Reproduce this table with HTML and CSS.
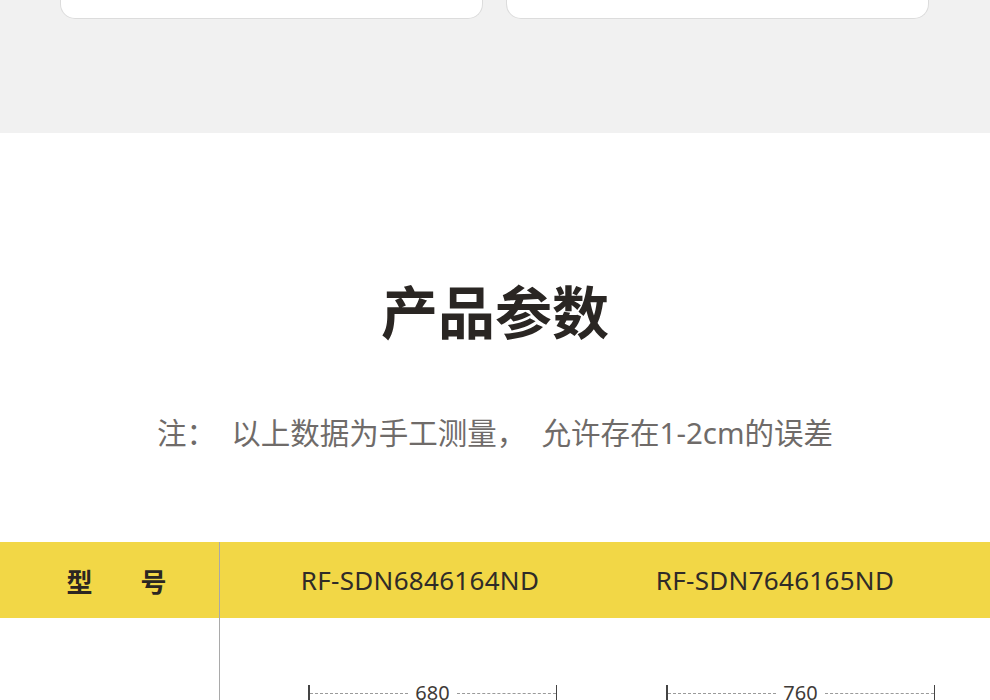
FILE: index.html
```html
<!DOCTYPE html>
<html lang="zh-CN">
<head>
<meta charset="utf-8">
<title>产品参数</title>
<link rel="stylesheet" href="styles.css">
</head>
<body>
<section class="gray">
  <div class="card"></div>
  <div class="card"></div>
</section>
<section class="params">
  <h1 class="title">产品参数</h1>
  <p class="note">注：&nbsp;&nbsp;以上数据为手工测量，&nbsp;&nbsp;允许存在1-2cm的误差</p>
</section>
<section class="table">
  <div class="row head">
    <div class="label">型<span class="sp"></span>号</div>
    <div class="cell c1">RF-SDN6846164ND</div>
    <div class="cell c2">RF-SDN7646165ND</div>
  </div>
  <div class="row body">
    <div class="label"></div>
    <div class="cell c1"><div class="dim d1"><i class="tick"></i><i class="dash"></i><span>680</span><i class="dash"></i><i class="tick"></i></div></div>
    <div class="cell c2"><div class="dim d2"><i class="tick"></i><i class="dash"></i><span>760</span><i class="dash"></i><i class="tick"></i></div></div>
  </div>
</section>
</body>
</html>
```
FILE: styles.css
```css
html, body { margin: 0; padding: 0; background: #fff; }
body { font-family: "Noto Sans CJK SC", "Noto Sans", sans-serif; width: 990px; overflow: hidden; }

.gray { background: #f1f1f1; height: 133px; display: flex; gap: 23px; padding-left: 60px; box-sizing: border-box; }
.card { width: 423px; height: 19px; box-sizing: border-box; background: #fff; border: 1px solid #dcdcdc; border-top: none; border-radius: 0 0 15px 15px; }

.params { height: 409px; box-sizing: border-box; padding-top: 148px; text-align: center; }
.title { margin: 0; font-size: 57px; line-height: 56px; font-weight: 700; color: #2a2623; letter-spacing: 0; }
.note { margin: 82px 0 0; font-family: "Noto Sans", "Noto Sans CJK SC", sans-serif; font-size: 29.5px; line-height: 28px; color: #6f6b69; }

.row { display: flex; }
.head { background: #f2d746; height: 76px; align-items: center; }
.label { width: 220px; border-right: 1px solid #a9a9a9; align-self: stretch; display: flex; align-items: center; justify-content: center; padding-left: 14px; box-sizing: border-box; font-size: 26px; font-weight: 700; color: #2b2622; }
.sp { display: inline-block; width: 48px; }
.cell { display: flex; justify-content: center; font-family: "Noto Sans", "Noto Sans CJK SC", sans-serif; font-size: 26px; letter-spacing: 0.3px; color: #2f2b28; }
.c1 { width: 400px; }
.c2 { width: 310px; }
.body { height: 120px; }
.body .cell { justify-content: flex-start; align-items: flex-start; padding-top: 67px; letter-spacing: 0; }
.dim { display: flex; align-items: center; height: 16px; font-size: 20px; color: #3f3b38; flex: none; }
.d1 { width: 249px; margin-left: 88px; }
.d2 { width: 269px; margin-left: 46px; }
.tick { width: 1.5px; height: 16px; background: #444; }
.dash { flex: 1; border-top: 1px dashed #9a9a9a; }
.dim span { padding: 0 7px; line-height: 16px; }
```
